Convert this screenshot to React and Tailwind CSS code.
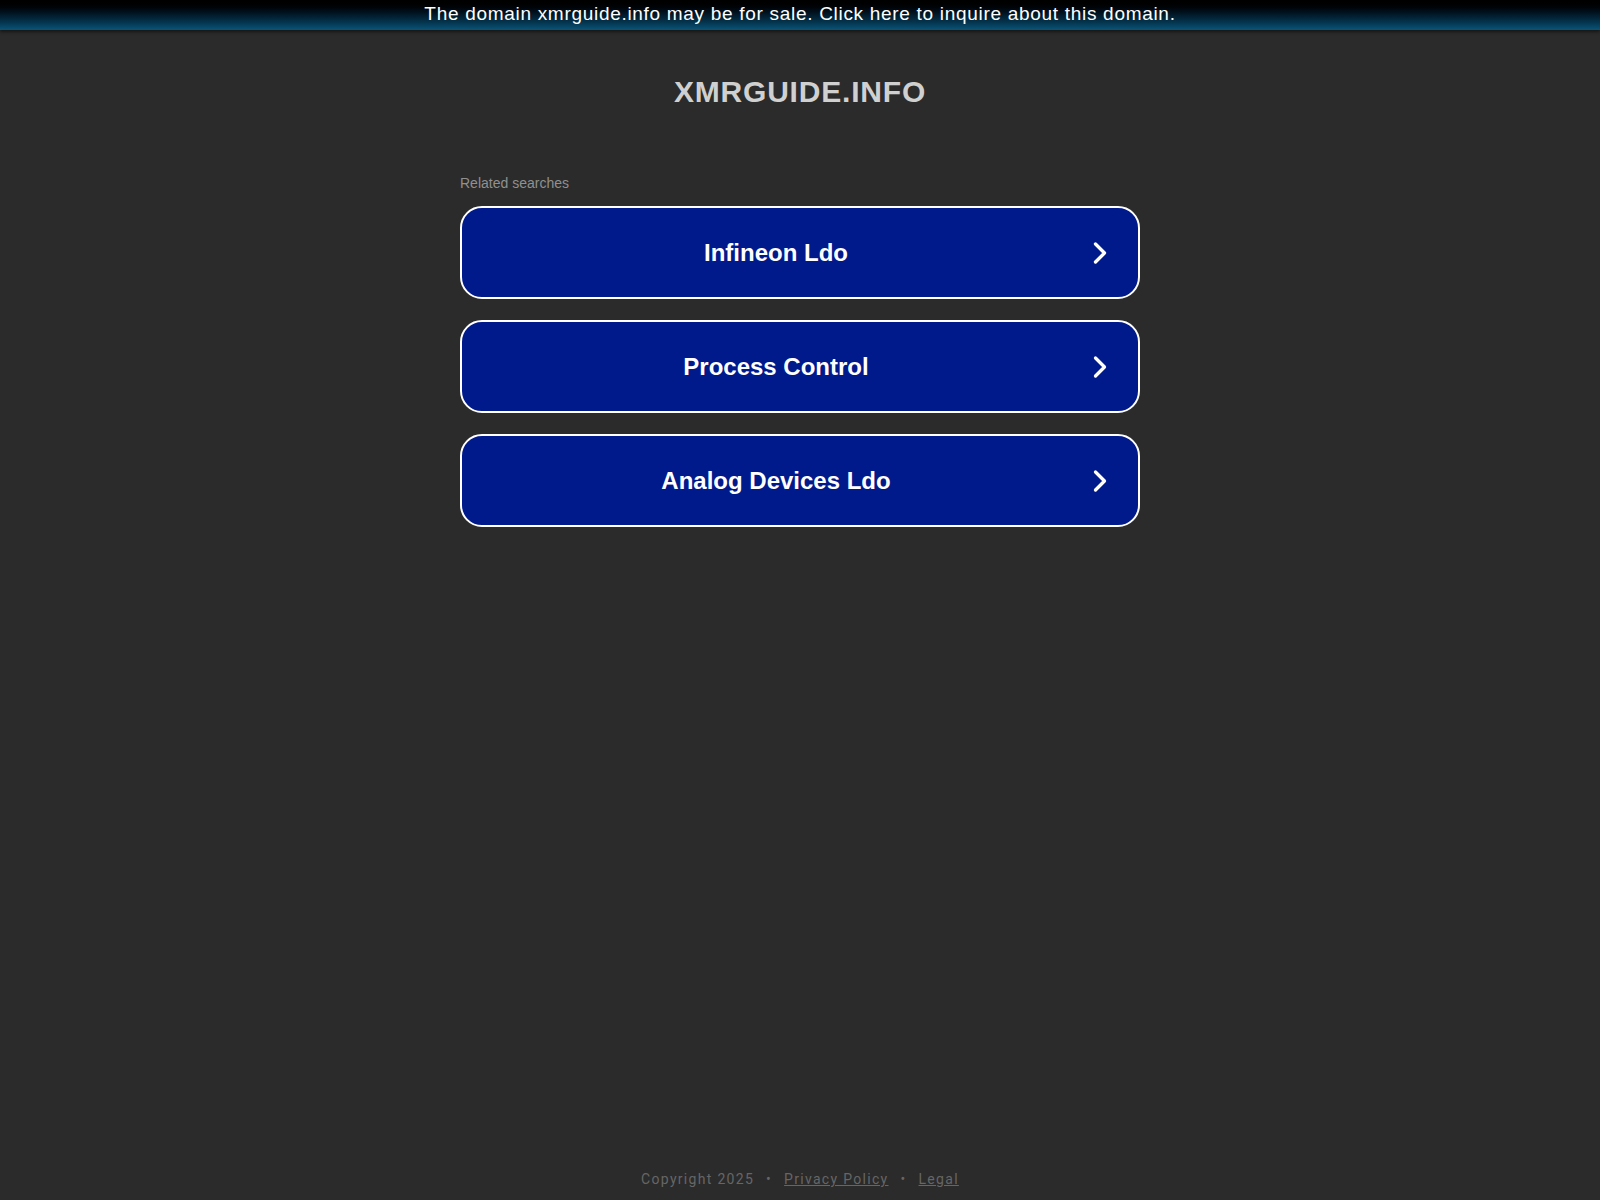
import { ChevronRight } from 'lucide-react';

const searches = ['Infineon Ldo', 'Process Control', 'Analog Devices Ldo'];

export default function App() {
  return (
    <div className="min-h-screen bg-[#2b2b2b] flex flex-col font-['Liberation_Sans',Arial,sans-serif]">
      <div className="h-[30px] bg-gradient-to-b from-[#000000] to-[#0b5378] flex items-center justify-center pb-[3px] shadow-[0_2px_3px_rgba(0,0,0,0.5)]">
        <span className="text-white text-[19px] tracking-[0.7px] leading-none">
          The domain xmrguide.info may be for sale. Click here to inquire about this domain.
        </span>
      </div>

      <div className="flex-1 flex flex-col items-center">
        <h1 className="mt-[44px] text-[30px] font-bold text-[#d0d0d0] tracking-[0.8px] leading-[36px]">XMRGUIDE.INFO</h1>

        <div className="w-[680px] mt-[64px]">
          <div className="text-[14px] text-[#909090] mb-[14px] leading-[18px]">Related searches</div>
          <div className="flex flex-col gap-[21px]">
            {searches.map((s) => (
              <div
                key={s}
                className="h-[93px] rounded-[22px] border-2 border-white bg-[#00198b] flex items-center relative"
              >
                <span className="flex-1 text-center text-white text-[24px] font-bold pr-[48px]">{s}</span>
                <ChevronRight className="absolute right-[20px] top-1/2 -translate-y-1/2 w-[36px] h-[36px] text-white" strokeWidth={2.2} />
              </div>
            ))}
          </div>
        </div>
      </div>

      <div className="pb-[10px] text-center text-[14px] tracking-[1.3px] text-[#666] font-['Roboto',sans-serif]">
        <span>Copyright 2025</span>
        <span className="mx-[12px]">•</span>
        <span className="underline">Privacy Policy</span>
        <span className="mx-[12px]">•</span>
        <span className="underline">Legal</span>
      </div>
    </div>
  );
}
